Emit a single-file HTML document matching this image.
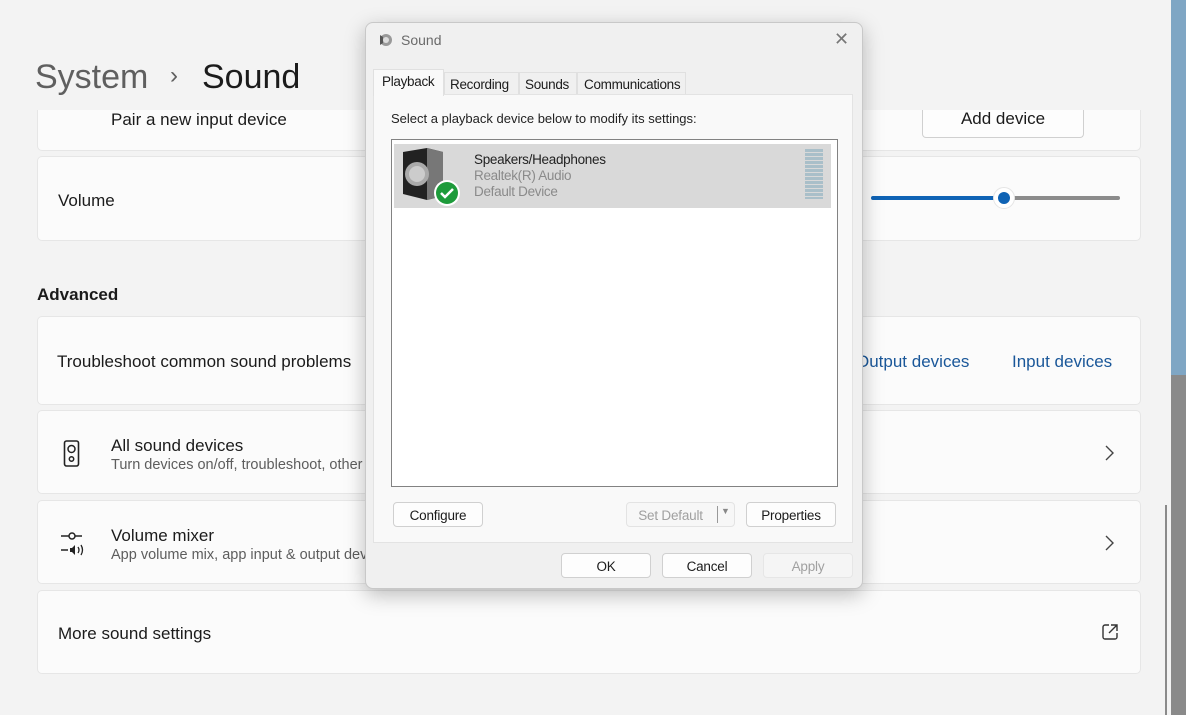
<!DOCTYPE html>
<html><head><meta charset="utf-8"><style>
*{box-sizing:border-box;margin:0;padding:0}
body{width:1186px;height:715px;overflow:hidden;background:#f3f3f3;font-family:"Liberation Sans",sans-serif;position:relative;color:#1b1b1b}
.a{position:absolute}
.card{position:absolute;left:37px;width:1104px;background:#fbfbfb;border:1px solid #e6e6e6;border-radius:5px}
.t{position:absolute;font-size:17px;color:#1b1b1b}
.s{position:absolute;font-size:14.5px;color:#5d5d5d}
.btn{position:absolute;background:#fdfdfd;border:1px solid #d0d0d0;border-radius:4px;font-size:13.5px;text-align:center;color:#1b1b1b;letter-spacing:-0.2px}
.dl{letter-spacing:-0.3px}
</style></head><body>
<div class="a" style="left:1171px;top:0;width:15px;height:375px;background:#7fa6c4"></div>
<div class="a" style="left:1171px;top:375px;width:15px;height:340px;background:#8a8a8a"></div>
<div class="a" style="left:1165px;top:505px;width:2px;height:210px;background:#8a8a8a"></div>
<div class="a" style="left:1022px;top:3px;width:11px;height:1px;background:#777"></div>
<div class="a" style="left:1079px;top:0;width:11px;height:8px;border:1px solid #777;border-top:none"></div>
<div class="a" style="left:1133px;top:-4px;font-size:16px;color:#777">✕</div>
<div class="card" style="top:104px;height:47px;border-top:none;border-radius:0 0 5px 5px"></div>
<div class="t" style="left:111px;top:110px">Pair a new input device</div>
<div class="a" style="left:0;top:0;width:1165px;height:110px;background:#f3f3f3"></div>
<div class="a" style="left:35px;top:58px;font-size:34px;color:#5f5f5f">System</div>
<div class="a" style="left:170px;top:62px;font-size:24px;color:#5f5f5f">›</div>
<div class="a" style="left:202px;top:58px;font-size:34px;color:#1b1b1b">Sound</div>
<div class="a" style="left:922px;top:110px;width:162px;height:28px;background:#fdfdfd;border:1px solid #d0d0d0;border-top:none;border-radius:0 0 4px 4px;font-size:17px;text-align:center;line-height:18px;overflow:hidden"><span style="position:relative;top:0px">Add device</span></div>
<div class="card" style="top:156px;height:85px"></div>
<div class="t" style="left:58px;top:191px">Volume</div>
<div class="a" style="left:871px;top:196px;width:133px;height:4px;background:#0f63b5;border-radius:2px"></div>
<div class="a" style="left:1004px;top:196px;width:116px;height:4px;background:#8b8b8b;border-radius:2px"></div>
<div class="a" style="left:993px;top:187px;width:22px;height:22px;border-radius:50%;background:#fff;border:1px solid #e5e5e5"></div>
<div class="a" style="left:998px;top:192px;width:12px;height:12px;border-radius:50%;background:#0f63b5"></div>
<div class="a" style="left:37px;top:285px;font-size:17px;color:#1b1b1b;font-weight:600">Advanced</div>
<div class="card" style="top:316px;height:89px"></div>
<div class="t" style="left:57px;top:352px">Troubleshoot common sound problems</div>
<div class="a" style="left:856px;top:352px;font-size:17px;color:#1a5799">Output devices</div>
<div class="a" style="left:1012px;top:352px;font-size:17px;color:#1a5799">Input devices</div>
<div class="card" style="top:410px;height:84px"></div>
<svg class="a" style="left:63px;top:440px" width="18" height="28" viewBox="0 0 18 28"><rect x="1.5" y="1" width="14" height="25" rx="2" fill="none" stroke="#222" stroke-width="1.6"/><circle cx="8.5" cy="9" r="3.5" fill="none" stroke="#222" stroke-width="1.5"/><circle cx="8.5" cy="19" r="2.2" fill="none" stroke="#222" stroke-width="1.5"/></svg>
<div class="t" style="left:111px;top:436px">All sound devices</div>
<div class="s" style="left:111px;top:457px">Turn devices on/off, troubleshoot, other options</div>
<svg class="a" style="left:1104px;top:445px" width="10" height="16" viewBox="0 0 10 16"><path d="M2 1l7 7-7 7" fill="none" stroke="#444" stroke-width="1.4"/></svg>
<div class="card" style="top:500px;height:84px"></div>
<svg class="a" style="left:60px;top:528px" width="28" height="28" viewBox="0 0 28 28"><path d="M1 8h8M15 8h7" stroke="#222" stroke-width="1.5"/><circle cx="12" cy="8" r="3" fill="none" stroke="#222" stroke-width="1.5"/><path d="M1 22h7" stroke="#222" stroke-width="1.5"/><path d="M10 20h2l3-3v10l-3-3h-2z" fill="#222"/><path d="M18 19q2 3 0 6M21 17q3 5 0 10" stroke="#222" stroke-width="1.3" fill="none"/></svg>
<div class="t" style="left:111px;top:526px">Volume mixer</div>
<div class="s" style="left:111px;top:547px">App volume mix, app input &amp; output devices</div>
<svg class="a" style="left:1104px;top:535px" width="10" height="16" viewBox="0 0 10 16"><path d="M2 1l7 7-7 7" fill="none" stroke="#444" stroke-width="1.4"/></svg>
<div class="card" style="top:590px;height:84px"></div>
<div class="t" style="left:58px;top:624px">More sound settings</div>
<svg class="a" style="left:1101px;top:623px" width="18" height="18" viewBox="0 0 18 18"><path d="M8 2H4a2 2 0 0 0-2 2v10a2 2 0 0 0 2 2h10a2 2 0 0 0 2-2v-4M10 2h6v6M16 2l-8 8" fill="none" stroke="#333" stroke-width="1.4"/></svg>
<!-- dialog -->
<div class="a" style="left:365px;top:22px;width:498px;height:567px;background:#f0f0f0;border:1px solid #c8c8c8;border-radius:8px;box-shadow:0 6px 20px rgba(0,0,0,.25)"></div>
<svg class="a" style="left:377px;top:32px" width="16" height="16" viewBox="0 0 16 16"><circle cx="9" cy="8" r="6" fill="#999"/><circle cx="9" cy="8" r="3" fill="#ddd"/><path d="M3 3l3 2v6l-3 2z" fill="#555"/></svg>
<div class="a" style="left:401px;top:32px;font-size:14px;color:#6a6a6a">Sound</div>
<div class="a" style="left:834px;top:29px;font-size:18px;color:#777">✕</div>
<div class="a" style="left:373px;top:94px;width:480px;height:449px;background:#f9f9f9;border:1px solid #e3e3e3"></div>
<div class="a dl" style="left:444px;top:72px;width:75px;height:22px;background:#f0f0f0;border:1px solid #e0e0e0;border-bottom:none;font-size:13.5px;padding:4px 0 0 5px">Recording</div>
<div class="a dl" style="left:519px;top:72px;width:58px;height:22px;background:#f0f0f0;border:1px solid #e0e0e0;border-bottom:none;font-size:13.5px;padding:4px 0 0 5px">Sounds</div>
<div class="a dl" style="left:577px;top:72px;width:109px;height:22px;background:#f0f0f0;border:1px solid #e0e0e0;border-bottom:none;font-size:13.5px;padding:4px 0 0 6px">Communications</div>
<div class="a dl" style="left:373px;top:69px;width:71px;height:27px;background:#f9f9f9;border:1px solid #e0e0e0;border-bottom:none;font-size:13.5px;padding:4px 0 0 8px">Playback</div>
<div class="a" style="left:391px;top:111px;font-size:13px;color:#222">Select a playback device below to modify its settings:</div>
<div class="a" style="left:391px;top:139px;width:447px;height:348px;background:#fff;border:1px solid #828282"></div>
<div class="a" style="left:394px;top:144px;width:437px;height:64px;background:#d9d9d9"></div>
<svg class="a" style="left:400px;top:146px" width="62" height="62" viewBox="0 0 62 62"><path d="M3 6l24-4 16 4v44l-16 4-24-6z" fill="#222"/><path d="M27 2l16 4v44l-16 4z" fill="#777"/><circle cx="17" cy="28" r="12" fill="#aaa"/><circle cx="17" cy="28" r="8" fill="#ccc"/><circle cx="47" cy="47" r="13" fill="#fff"/><circle cx="47" cy="47" r="11" fill="#1e9b3b"/><path d="M41 47l4 4 8-8" stroke="#fff" stroke-width="2.5" fill="none"/></svg>
<div class="a dl" style="left:474px;top:152px;font-size:13.5px;color:#222">Speakers/Headphones</div>
<div class="a dl" style="left:474px;top:168px;font-size:13.5px;color:#8a8a8a">Realtek(R) Audio</div>
<div class="a dl" style="left:474px;top:184px;font-size:13.5px;color:#8a8a8a">Default Device</div>
<div class="a" style="left:805px;top:149px;width:18px;height:50px;background:repeating-linear-gradient(#a9bfc9 0 3px,#d9d9d9 3px 4px)"></div>
<div class="btn" style="left:393px;top:502px;width:90px;height:25px;padding-top:5px">Configure</div>
<div class="btn" style="left:626px;top:502px;width:109px;height:25px;padding:5px 20px 0 0;color:#a0a0a0;background:#f7f7f7;border-color:#e3e3e3">Set Default<span style="position:absolute;left:90px;top:3px;width:1px;height:17px;background:#999"></span><span style="position:absolute;left:94px;top:3px;font-size:9px;color:#888">▼</span></div>
<div class="btn" style="left:746px;top:502px;width:90px;height:25px;padding-top:5px">Properties</div>
<div class="btn" style="left:561px;top:553px;width:90px;height:25px;padding-top:5px">OK</div>
<div class="btn" style="left:662px;top:553px;width:90px;height:25px;padding-top:5px">Cancel</div>
<div class="btn" style="left:763px;top:553px;width:90px;height:25px;padding-top:5px;color:#a0a0a0;background:#f5f5f5;border-color:#e6e6e6">Apply</div>
</body></html>
